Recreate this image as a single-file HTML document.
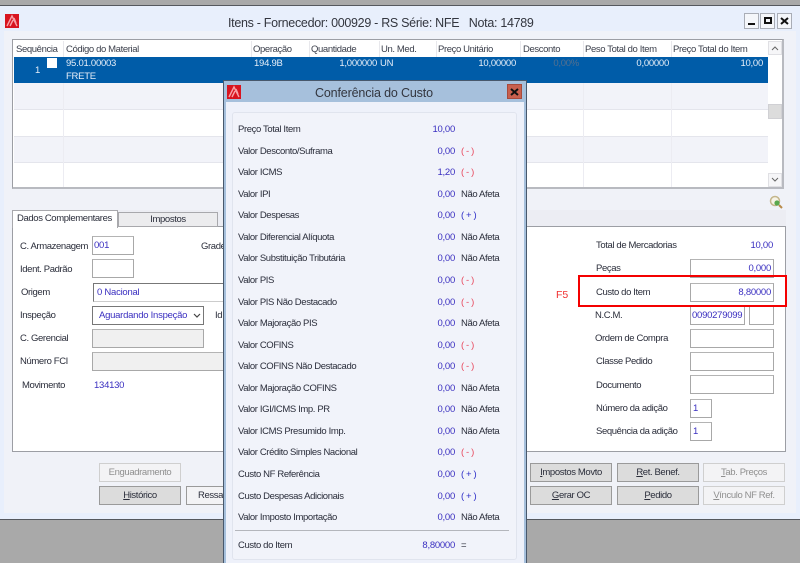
<!DOCTYPE html>
<html lang="pt"><head><meta charset="utf-8"><title>Itens</title>
<style>
html,body{margin:0;padding:0}
body{width:800px;height:563px;position:relative;overflow:hidden;background:#a9a9a9;font-family:"Liberation Sans",sans-serif;font-size:9.5px;color:#2a2d3a;letter-spacing:-.38px;filter:blur(.3px)}
div,span.t{position:absolute;box-sizing:border-box}
.t{white-space:nowrap;line-height:12px;height:12px;margin-top:1px}
.b{color:#3a2fc0;letter-spacing:-.25px}
.w{color:#e6eef8;letter-spacing:-.25px}
.r{text-align:right}
.h{color:#3c404c;top:43px}
.s{background:#ececf2;width:1px;top:57px;height:130px}
.st{background:#e4e5ec;height:1px;left:14px;width:754px}
.i{background:#fff;border:1px solid #a8a8a8;border-top-color:#b4b4b4;height:19px;line-height:18px!important}
.btn{width:82px;height:19px;border:1px solid #9a9a9a;background:#dcdcdc;text-align:center;line-height:17px;color:#2a2d3a;white-space:nowrap}
.d{background:#f3f3f5;border-color:#cfcfcf;color:#8f8f8f}
u{text-decoration:underline}
.wb{width:15px;height:16px;background:#f4f6fa;border:1px solid #a9adb6;top:13px}
.minus{color:#e84a5f}.plus{color:#2f2fc8}
</style></head><body>
<div style="left:0;top:5px;width:800px;height:515px;background:#e8effc;border-top:1px solid #55585e;border-bottom:1px solid #55585e"></div>
<div style="left:4px;top:31px;width:792px;height:482px;background:#f0f2f8"></div>

<svg style="position:absolute;left:5px;top:14px" width="14" height="14" viewBox="0 0 14 14"><rect width="14" height="14" fill="#d8141f"/><path d="M2 12 L7 2 L12 12 M5 12 L8 6 M9 4 L11 9" stroke="#f7a0a6" stroke-width="1.4" fill="none"/></svg>
<span class="t" style="left:228px;top:15px;font-size:12.5px;line-height:14px;height:14px;color:#33363f;letter-spacing:-.3px">Itens - Fornecedor: 000929 - RS Série: NFE &nbsp; Nota: 14789</span>
<div class="wb" style="left:744px"><div style="left:3px;top:9px;width:7px;height:2px;background:#111"></div></div>
<div class="wb" style="left:760px"><div style="left:3px;top:3px;width:8px;height:7px;border:2px solid #111"></div></div>
<div class="wb" style="left:777px"><svg style="position:absolute;left:2px;top:3px" width="9" height="8"><path d="M1 1 L8 7 M8 1 L1 7" stroke="#111" stroke-width="2"/></svg></div>

<!-- Grid -->
<div style="left:12px;top:39px;width:772px;height:150px;background:#fff;border:1px solid #9c9ea4;border-right:2px solid #b8bac0;border-bottom:2px solid #b8bac0"></div>
<div style="left:14px;top:83px;width:754px;height:27px;background:#f2f3f9"></div>
<div style="left:14px;top:136px;width:754px;height:27px;background:#f2f3f9"></div>
<div class="st" style="top:109px"></div><div class="st" style="top:136px"></div><div class="st" style="top:162px"></div>
<div class="s" style="left:63px"></div><div class="s" style="left:251px"></div><div class="s" style="left:309px"></div><div class="s" style="left:379px"></div><div class="s" style="left:436px"></div><div class="s" style="left:520px"></div><div class="s" style="left:583px"></div><div class="s" style="left:671px"></div>
<div style="left:14px;top:57px;width:754px;height:26px;background:#005ca8"></div>
<div style="left:14px;top:41px;width:754px;height:16px;background:#fff"></div>
<div style="left:63px;top:41px;width:1px;height:16px;background:#e8e8ec"></div><div style="left:251px;top:41px;width:1px;height:16px;background:#e8e8ec"></div><div style="left:309px;top:41px;width:1px;height:16px;background:#e8e8ec"></div><div style="left:379px;top:41px;width:1px;height:16px;background:#e8e8ec"></div><div style="left:436px;top:41px;width:1px;height:16px;background:#e8e8ec"></div><div style="left:520px;top:41px;width:1px;height:16px;background:#e8e8ec"></div><div style="left:583px;top:41px;width:1px;height:16px;background:#e8e8ec"></div><div style="left:671px;top:41px;width:1px;height:16px;background:#e8e8ec"></div>
<span class="t h" style="left:16px">Sequência</span><span class="t h" style="left:66px">Código do Material</span><span class="t h" style="left:253px">Operação</span><span class="t h" style="left:311px">Quantidade</span><span class="t h" style="left:381px">Un. Med.</span><span class="t h" style="left:438px">Preço Unitário</span><span class="t h" style="left:523px">Desconto</span><span class="t h" style="left:585px">Peso Total do Item</span><span class="t h" style="left:673px">Preço Total do Item</span>
<span class="t w" style="left:35px;top:64px">1</span>
<div style="left:47px;top:58px;width:10px;height:10px;background:#fff"></div>
<span class="t w" style="left:66px;top:57px">95.01.00003</span><span class="t w" style="left:66px;top:70px">FRETE</span>
<span class="t w" style="left:254px;top:57px">194.9B</span>
<span class="t w r" style="left:320px;width:57px;top:57px">1,000000</span><span class="t w" style="left:380px;top:57px">UN</span>
<span class="t w r" style="left:450px;width:66px;top:57px">10,00000</span>
<span class="t r" style="left:530px;width:49px;top:57px;color:#54708f;letter-spacing:-.25px">0,00%</span>
<span class="t w r" style="left:590px;width:79px;top:57px">0,00000</span>
<span class="t w r" style="left:700px;width:63px;top:57px">10,00</span>
<!-- scrollbar -->
<div style="left:768px;top:41px;width:14px;height:146px;background:#fff"></div>
<div style="left:768px;top:41px;width:14px;height:14px;background:#f6f6f8;border:1px solid #e0e0e4"></div>
<svg style="position:absolute;left:771px;top:46px" width="8" height="5"><path d="M1 4 L4 1 L7 4" stroke="#666" fill="none"/></svg>
<div style="left:768px;top:104px;width:14px;height:15px;background:#dcdcdc;border:1px solid #d0d0d4"></div>
<div style="left:768px;top:173px;width:14px;height:14px;background:#f6f6f8;border:1px solid #e0e0e4"></div>
<svg style="position:absolute;left:771px;top:177px" width="8" height="5"><path d="M1 1 L4 4 L7 1" stroke="#666" fill="none"/></svg>
<svg style="position:absolute;left:769px;top:195px" width="15" height="14"><circle cx="6" cy="6" r="4.5" fill="#f6f3e6" stroke="#c4b68c" stroke-width="1.5"/><circle cx="8" cy="8" r="2.6" fill="#5aa84e"/><path d="M10 10 L13 13" stroke="#b98b4a" stroke-width="2"/></svg>

<!-- Tabs -->
<div style="left:12px;top:210px;width:774px;height:17px;background:#ecedf3"></div>
<div style="left:12px;top:226px;width:774px;height:226px;background:#fff;border:1px solid #9c9ea4"></div>
<div style="left:118px;top:212px;width:100px;height:15px;background:#ececee;border:1px solid #a8a8ac;text-align:center;line-height:14px;color:#2a2d3a">Impostos</div>
<div style="left:12px;top:210px;width:106px;height:18px;background:#fff;border:1px solid #a8a8ac;border-bottom:none;line-height:15px;padding-left:4px;color:#2a2d3a;white-space:nowrap">Dados Complementares</div>

<span class="t" style="left:20px;top:240px">C. Armazenagem</span><div class="i b" style="left:92px;top:236px;width:42px;padding-left:1px">001</div>
<span class="t" style="left:201px;top:240px">Grade</span>
<span class="t" style="left:20px;top:263px">Ident. Padrão</span><div class="i" style="left:92px;top:259px;width:42px"></div>
<span class="t" style="left:21px;top:286px">Origem</span><div class="i b" style="left:93px;top:283px;width:132px;padding-left:3px;border-color:#777 #ccc #ccc #777">0 Nacional</div>
<span class="t" style="left:20px;top:309px">Inspeção</span><div class="i b" style="left:92px;top:306px;width:112px;padding-left:6px;border-color:#777;white-space:nowrap">Aguardando Inspeção<svg style="position:absolute;left:100px;top:6px" width="8" height="6"><path d="M1 1 L4 4 L7 1" stroke="#444" stroke-width="1.2" fill="none"/></svg></div>
<span class="t" style="left:215px;top:309px">Id</span>
<span class="t" style="left:20px;top:332px">C. Gerencial</span><div class="i" style="left:92px;top:329px;width:112px;background:#f0f0f0"></div>
<span class="t" style="left:20px;top:355px">Número FCI</span><div class="i" style="left:92px;top:352px;width:133px;background:#f0f0f0"></div>
<span class="t" style="left:22px;top:379px">Movimento</span><span class="t b" style="left:94px;top:379px">134130</span>

<span class="t" style="left:596px;top:239px">Total de Mercadorias</span><span class="t b r" style="left:720px;width:53px;top:239px">10,00</span>
<span class="t" style="left:596px;top:262px">Peças</span><div class="i b r" style="left:690px;top:259px;width:84px;padding-right:2px">0,000</div>
<span class="t" style="left:596px;top:286px">Custo do Item</span><div class="i b r" style="left:690px;top:283px;width:84px;padding-right:2px">8,80000</div>
<span class="t" style="left:595px;top:309px">N.C.M.</span><div class="i b" style="left:690px;top:306px;width:55px;padding-left:1px">0090279099</div><div class="i" style="left:749px;top:306px;width:25px"></div>
<span class="t" style="left:595px;top:332px">Ordem de Compra</span><div class="i" style="left:690px;top:329px;width:84px"></div>
<span class="t" style="left:596px;top:355px">Classe Pedido</span><div class="i" style="left:690px;top:352px;width:84px"></div>
<span class="t" style="left:596px;top:379px">Documento</span><div class="i" style="left:690px;top:375px;width:84px"></div>
<span class="t" style="left:596px;top:402px">Número da adição</span><div class="i b" style="left:690px;top:399px;width:22px;padding-left:2px">1</div>
<span class="t" style="left:596px;top:425px">Sequência da adição</span><div class="i b" style="left:690px;top:422px;width:22px;padding-left:2px">1</div>
<div style="left:578px;top:275px;width:209px;height:32px;border:2px solid #f40000"></div>
<span class="t" style="left:556px;top:288px;color:#f03030;font-size:10.5px;letter-spacing:0">F5</span>

<div class="btn d" style="left:99px;top:463px">Enguadramento</div>
<div class="btn" style="left:99px;top:486px"><u>H</u>istórico</div>
<div class="btn" style="left:186px;top:486px;text-align:left;padding-left:11px;background:#f3f3f5">Ressa</div>
<div class="btn" style="left:530px;top:463px"><u>I</u>mpostos Movto</div>
<div class="btn" style="left:617px;top:463px"><u>R</u>et. Benef.</div>
<div class="btn d" style="left:703px;top:463px"><u>T</u>ab. Preços</div>
<div class="btn" style="left:530px;top:486px"><u>G</u>erar OC</div>
<div class="btn" style="left:617px;top:486px"><u>P</u>edido</div>
<div class="btn d" style="left:703px;top:486px"><u>V</u>ínculo NF Ref.</div>

<!-- Dialog -->
<div style="left:223px;top:80px;width:304px;height:483px;background:#a6c0dc;border:1px solid #48586c;border-bottom:none"></div>
<div style="left:226px;top:102px;width:298px;height:461px;background:#eef1fa"></div>
<svg style="position:absolute;left:227px;top:85px" width="14" height="14" viewBox="0 0 14 14"><rect width="14" height="14" fill="#d8141f"/><path d="M2 12 L7 2 L12 12 M5 12 L8 6 M9 4 L11 9" stroke="#f7a0a6" stroke-width="1.4" fill="none"/></svg>
<span class="t" style="left:315px;top:85px;font-size:12.5px;line-height:14px;height:14px;color:#33363f;letter-spacing:-.15px">Conferência do Custo</span>
<div style="left:507px;top:84px;width:15px;height:15px;background:#c8604e;border:1px solid #a84a3c"><svg style="position:absolute;left:2px;top:3px" width="9" height="8"><path d="M1 1 L8 7 M8 1 L1 7" stroke="#111" stroke-width="2"/></svg></div>
<div style="left:232px;top:112px;width:285px;height:448px;background:#f1f3fa;border:1px solid #e0e4ee;border-radius:3px"></div>
<div style="left:235px;top:530px;width:274px;height:1px;background:#b4b6bc"></div>

<span class="t" style="left:238px;top:123px">Preço Total Item</span><span class="t b r" style="left:400px;width:55px;top:123px">10,00</span>
<span class="t" style="left:238px;top:145px">Valor Desconto/Suframa</span><span class="t b r" style="left:400px;width:55px;top:145px">0,00</span><span class="t minus" style="left:461px;top:145px">( - )</span>
<span class="t" style="left:238px;top:166px">Valor ICMS</span><span class="t b r" style="left:400px;width:55px;top:166px">1,20</span><span class="t minus" style="left:461px;top:166px">( - )</span>
<span class="t" style="left:238px;top:188px">Valor IPI</span><span class="t b r" style="left:400px;width:55px;top:188px">0,00</span><span class="t" style="left:461px;top:188px">Não Afeta</span>
<span class="t" style="left:238px;top:209px">Valor Despesas</span><span class="t b r" style="left:400px;width:55px;top:209px">0,00</span><span class="t plus" style="left:461px;top:209px">( + )</span>
<span class="t" style="left:238px;top:231px">Valor Diferencial Alíquota</span><span class="t b r" style="left:400px;width:55px;top:231px">0,00</span><span class="t" style="left:461px;top:231px">Não Afeta</span>
<span class="t" style="left:238px;top:252px">Valor Substituição Tributária</span><span class="t b r" style="left:400px;width:55px;top:252px">0,00</span><span class="t" style="left:461px;top:252px">Não Afeta</span>
<span class="t" style="left:238px;top:274px">Valor PIS</span><span class="t b r" style="left:400px;width:55px;top:274px">0,00</span><span class="t minus" style="left:461px;top:274px">( - )</span>
<span class="t" style="left:238px;top:296px">Valor PIS Não Destacado</span><span class="t b r" style="left:400px;width:55px;top:296px">0,00</span><span class="t minus" style="left:461px;top:296px">( - )</span>
<span class="t" style="left:238px;top:317px">Valor Majoração PIS</span><span class="t b r" style="left:400px;width:55px;top:317px">0,00</span><span class="t" style="left:461px;top:317px">Não Afeta</span>
<span class="t" style="left:238px;top:339px">Valor COFINS</span><span class="t b r" style="left:400px;width:55px;top:339px">0,00</span><span class="t minus" style="left:461px;top:339px">( - )</span>
<span class="t" style="left:238px;top:360px">Valor COFINS Não Destacado</span><span class="t b r" style="left:400px;width:55px;top:360px">0,00</span><span class="t minus" style="left:461px;top:360px">( - )</span>
<span class="t" style="left:238px;top:382px">Valor Majoração COFINS</span><span class="t b r" style="left:400px;width:55px;top:382px">0,00</span><span class="t" style="left:461px;top:382px">Não Afeta</span>
<span class="t" style="left:238px;top:403px">Valor IGI/ICMS Imp. PR</span><span class="t b r" style="left:400px;width:55px;top:403px">0,00</span><span class="t" style="left:461px;top:403px">Não Afeta</span>
<span class="t" style="left:238px;top:425px">Valor ICMS Presumido Imp.</span><span class="t b r" style="left:400px;width:55px;top:425px">0,00</span><span class="t" style="left:461px;top:425px">Não Afeta</span>
<span class="t" style="left:238px;top:446px">Valor Crédito Simples Nacional</span><span class="t b r" style="left:400px;width:55px;top:446px">0,00</span><span class="t minus" style="left:461px;top:446px">( - )</span>
<span class="t" style="left:238px;top:468px">Custo NF Referência</span><span class="t b r" style="left:400px;width:55px;top:468px">0,00</span><span class="t plus" style="left:461px;top:468px">( + )</span>
<span class="t" style="left:238px;top:490px">Custo Despesas Adicionais</span><span class="t b r" style="left:400px;width:55px;top:490px">0,00</span><span class="t plus" style="left:461px;top:490px">( + )</span>
<span class="t" style="left:238px;top:511px">Valor Imposto Importação</span><span class="t b r" style="left:400px;width:55px;top:511px">0,00</span><span class="t" style="left:461px;top:511px">Não Afeta</span>
<span class="t" style="left:238px;top:539px">Custo do Item</span><span class="t b r" style="left:400px;width:55px;top:539px">8,80000</span><span class="t" style="left:461px;top:539px">=</span>
</body></html>
